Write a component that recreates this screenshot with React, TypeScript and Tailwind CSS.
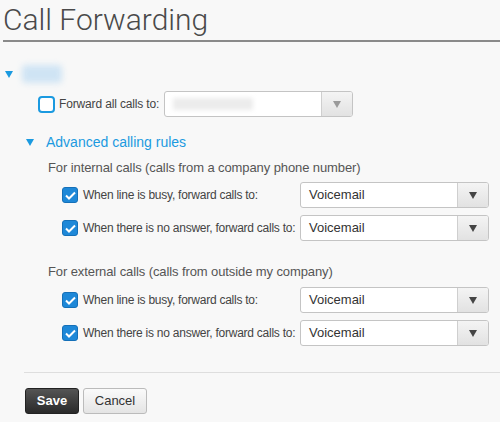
import React from 'react';

// --- Small pieces ---
function Caret({ className = '' }: { className?: string }) {
    return (
        <svg width="8" height="7" viewBox="0 0 8 7" className={className}>
            <path d="M0 0 L8 0 L4 7 Z" fill="currentColor" />
        </svg>
    );
}

function CheckBox({ checked }: { checked: boolean }) {
    if (!checked) {
        return <span className="block shrink-0 w-[17px] h-[17px] rounded-[4px] border-2 border-[#1b9ae0] bg-white" />;
    }
    return (
        <span className="flex shrink-0 items-center justify-center w-[16px] h-[16px] rounded-[3px] bg-[#1e88d8] border border-[#1570b8]">
            <svg width="11" height="9" viewBox="0 0 11 9">
                <path d="M1 4.5 L4 7.5 L10 1.5" stroke="white" strokeWidth="2" fill="none" />
            </svg>
        </span>
    );
}

function Select({ value, disabled = false, className = '' }: { value?: string; disabled?: boolean; className?: string }) {
    return (
        <div className={`flex shrink-0 h-[26px] rounded-[3px] border border-[#c4c4c4] bg-white overflow-hidden ${className}`}>
            <div className="flex-1 flex items-center pl-[8px] text-[13px] text-[#333]">
                {disabled ? (
                    <span className="block w-[80px] h-[12px] bg-[#ececec] blur-[2px]" />
                ) : (
                    value
                )}
            </div>
            <div className="w-[31px] flex items-center justify-center border-l border-[#cfcfcf] bg-gradient-to-b from-[#f4f4f4] to-[#e2e2e2]">
                <Caret className={disabled ? 'text-[#9a9a9a]' : 'text-[#444]'} />
            </div>
        </div>
    );
}

function RuleRow({ label }: { label: string }) {
    return (
        <div className="flex items-center h-[26px]">
            <div className="w-[62px] shrink-0" />
            <CheckBox checked />
            <span className="ml-[5px] text-[12px] tracking-[-0.25px] text-[#444] w-[217px] shrink-0 whitespace-nowrap">{label}</span>
            <Select value="Voicemail" className="w-[189px]" />
        </div>
    );
}

// --- Component ---
export default function App() {
    return (
        <main
            className="w-[500px] h-[422px] bg-[#f8f8f8] overflow-hidden"
            style={{ fontFamily: '"Liberation Sans", Arial, sans-serif' }}
        >
            {/* Header */}
            <div className="pl-[3px] pt-[2px]">
                <h1
                    className="text-[30px] leading-[36px] font-light text-[#4a4a4a]"
                    style={{ fontFamily: 'Roboto, "Liberation Sans", sans-serif' }}
                >
                    Call Forwarding
                </h1>
                <div className="mt-[2px] h-[2px] bg-[#8a8a8a]" />
            </div>

            {/* Line */}
            <div className="flex items-center mt-[22px] pl-[5px] h-[20px]">
                <Caret className="text-[#1b9ae0]" />
                <span className="ml-[9px] block w-[40px] h-[18px] rounded bg-[#cfe4f4] blur-[3px]" />
            </div>

            <div className="flex items-center mt-[7px] h-[26px] pl-[38px]">
                <CheckBox checked={false} />
                <span className="ml-[4px] text-[12px] tracking-[-0.15px] text-[#444] w-[105px] shrink-0 whitespace-nowrap">Forward all calls to:</span>
                <Select disabled className="w-[189px]" />
            </div>

            {/* Advanced */}
            <div className="flex items-center mt-[15px] h-[20px] pl-[26px]">
                <Caret className="text-[#1b9ae0]" />
                <span className="ml-[12px] text-[14px] text-[#1b9ae0]">Advanced calling rules</span>
            </div>

            <div className="mt-[7px] pl-[48px] text-[13px] tracking-[-0.1px] text-[#555] h-[18px] leading-[18px] whitespace-nowrap">
                For internal calls (calls from a company phone number)
            </div>
            <div className="mt-[5px] flex flex-col gap-[7px]">
                <RuleRow label="When line is busy, forward calls to:" />
                <RuleRow label="When there is no answer, forward calls to:" />
            </div>

            <div className="mt-[22px] pl-[48px] text-[13px] tracking-[-0.1px] text-[#555] h-[18px] leading-[18px] whitespace-nowrap">
                For external calls (calls from outside my company)
            </div>
            <div className="mt-[6px] flex flex-col gap-[7px]">
                <RuleRow label="When line is busy, forward calls to:" />
                <RuleRow label="When there is no answer, forward calls to:" />
            </div>

            {/* Footer */}
            <div className="ml-[24px] mt-[26px] h-px bg-[#dedede]" />
            <div className="flex gap-[4px] pl-[25px] mt-[15px]">
                <button className="w-[54px] h-[26px] rounded-[3px] border border-[#222] bg-gradient-to-b from-[#555] to-[#2a2a2a] text-white text-[13px] font-bold">
                    Save
                </button>
                <button className="w-[64px] h-[26px] rounded-[3px] border border-[#bbb] bg-gradient-to-b from-[#fafafa] to-[#e4e4e4] text-[#333] text-[13px]">
                    Cancel
                </button>
            </div>
        </main>
    );
}
